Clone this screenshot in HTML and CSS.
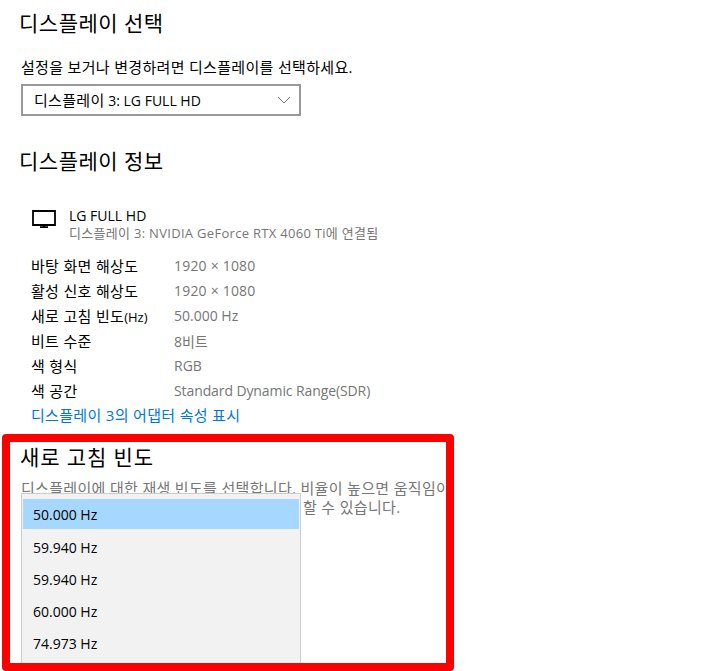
FILE: index.html
```html
<!DOCTYPE html>
<html lang="ko">
<head>
<meta charset="utf-8">
<title>디스플레이 설정</title>
<link rel="stylesheet" href="styles.css">
</head>
<body>
<main class="page">
  <section class="select-section">
    <h2 class="heading">디스플레이 선택</h2>
    <p class="label ko">설정을 보거나 변경하려면 디스플레이를 선택하세요.</p>
    <div class="combo">
      <span class="combo-text"><span class="ko">디스플레이</span> 3: LG FULL HD</span>
      <svg class="chevron" width="14" height="8" viewBox="0 0 14 8"><path d="M1 1l6 6 6-6" fill="none" stroke="#6e6e6e" stroke-width="1"/></svg>
    </div>
  </section>
  <section class="info-section">
    <h2 class="heading">디스플레이 정보</h2>
    <div class="device">
      <svg class="monitor" width="24" height="18" viewBox="0 0 24 18"><path d="M1 1h22v14H1zM12 15v2.500M8 17.250h8" fill="none" stroke="#000" stroke-width="1.800"/></svg>
      <div class="device-text">
        <div class="device-name">LG FULL HD</div>
        <div class="device-sub">디스플레이 3: NVIDIA GeForce RTX 4060 Ti에 연결됨</div>
      </div>
    </div>
    <dl class="specs">
      <dt class="ko">바탕 화면 해상도</dt><dd class="wide">1920 × 1080</dd>
      <dt class="ko">활성 신호 해상도</dt><dd class="wide">1920 × 1080</dd>
      <dt class="ko">새로 고침 빈도<span class="unit">(Hz)</span></dt><dd>50.000 Hz</dd>
      <dt class="ko">비트 수준</dt><dd>8비트</dd>
      <dt class="ko">색 형식</dt><dd>RGB</dd>
      <dt class="ko">색 공간</dt><dd class="narrow">Standard Dynamic Range(SDR)</dd>
    </dl>
    <a class="link ko" href="#">디스플레이 3의 어댑터 속성 표시</a>
  </section>
  <section class="refresh-section">
    <h2 class="heading heading-refresh">새로 고침 빈도</h2>
    <p class="desc ko">디스플레이에 대한 재생 빈도를 선택합니다. 비율이 높으면 움직임이 더</p>
    <p class="desc desc-second ko">할 수 있습니다.</p>
    <ul class="menu">
      <li class="menu-item selected">50.000 Hz</li>
      <li class="menu-item">59.940 Hz</li>
      <li class="menu-item">59.940 Hz</li>
      <li class="menu-item">60.000 Hz</li>
      <li class="menu-item">74.973 Hz</li>
    </ul>
  </section>
</main>
<div class="highlight"></div>
</body>
</html>
```
FILE: styles.css
```css
* { box-sizing: border-box; }
html, body { margin: 0; height: 671px; overflow: hidden; background: #fff; }
body {
  font-family: "Open Sans", "Noto Sans CJK KR", sans-serif;
  font-size: 14px;
  color: #000;
  position: relative;
}
.page { padding: 9px 0 0 21px; }
.ko { font-size: 15px; letter-spacing: 0.32px; }
.heading {
  margin: 0 0 0 -2px;
  font-size: 21px;
  font-weight: 400;
  line-height: 28px;
  letter-spacing: 0.5px;
}
.label { margin: 20px 0 0; line-height: 20px; height: 20px; }
.combo {
  margin-top: 7px;
  width: 280px;
  height: 32px;
  border: 2px solid #999;
  padding: 0 8px 0 11px;
  display: flex;
  align-items: center;
  justify-content: space-between;
}
.combo-text { margin-bottom: 2px; }
.info-section { margin-top: 31px; }
.device { display: flex; align-items: flex-start; margin: 32px 0 0 11px; }
.monitor { margin-top: 3px; flex: none; }
.device-text { margin-left: 13px; }
.device-name, .device-sub { line-height: 17px; }
.device-name { font-size: 14px; }
.device-sub { margin-top: 1px; color: #767676; font-size: 13px; letter-spacing: 0.3px; }
.specs {
  margin: 11px 0 0 10px;
  display: grid;
  grid-template-columns: 143px 1fr;
  grid-auto-rows: 25px;
  align-items: center;
}
.unit { font-size: 13px; letter-spacing: 0; }
.specs dd { margin: 0; color: #767676; }
.specs dd.wide { letter-spacing: 0.2px; }
.specs dd.narrow { letter-spacing: -0.1px; }
.link { display: block; margin-left: 10px; line-height: 25px; color: #0078d7; text-decoration: none; }
.refresh-section { position: relative; margin-top: 15px; width: 425px; overflow: hidden; height: 226px; }
.heading-refresh { margin-left: -1px; letter-spacing: 0.9px; }
.desc { margin: 8px 0 0; line-height: 19px; height: 19px; color: #767676; white-space: nowrap; }
.desc-second { margin: 0; padding-left: 282px; }
.menu {
  position: absolute;
  top: 50px;
  left: 0;
  width: 280px;
  height: 172px;
  margin: 0;
  padding: 5px 1px;
  list-style: none;
  background: #f2f2f2;
  border: 1px solid #ccc;
}
.menu-item { height: 32px; padding-left: 10px; display: flex; align-items: center; }
.menu-item.selected { height: 30px; margin-bottom: 2px; background: #a6d8ff; }
.highlight {
  position: absolute;
  left: 2px;
  top: 434px;
  width: 452px;
  height: 237px;
  border: 8px solid #f00;
  border-radius: 4px;
  pointer-events: none;
}
```
